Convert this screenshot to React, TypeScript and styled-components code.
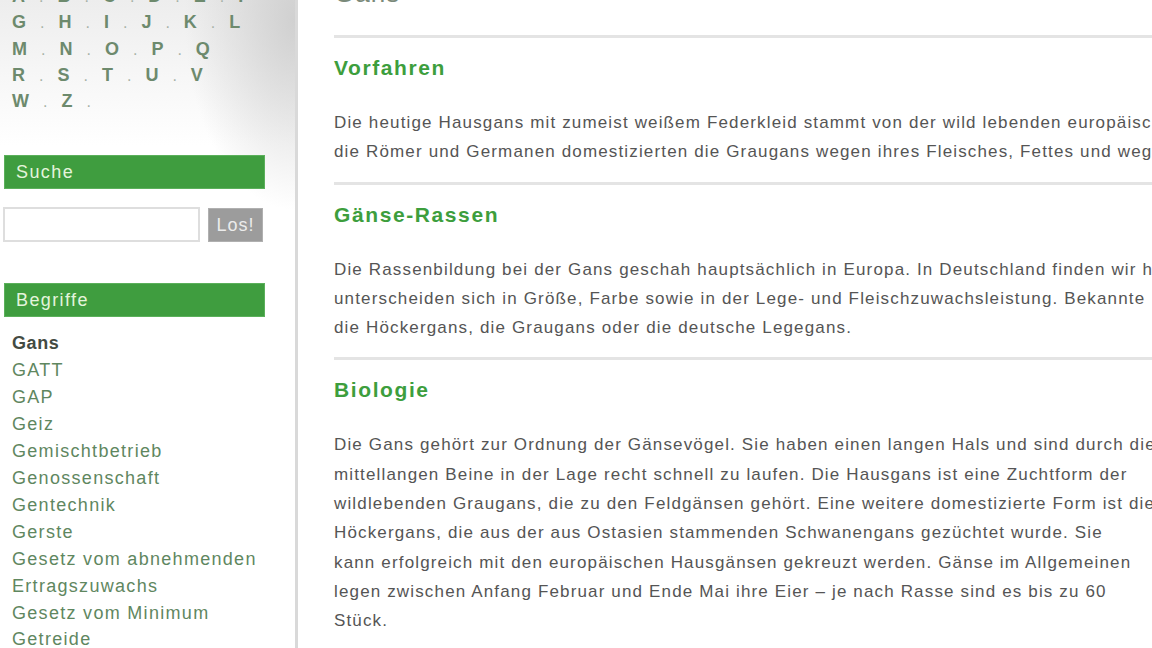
import React from "react";
import styled, { createGlobalStyle } from "styled-components";

const GlobalStyle = createGlobalStyle`
  html, body {
    margin: 0;
    padding: 0;
    width: 1152px;
    height: 648px;
    overflow: hidden;
    background: #ffffff;
  }
  * {
    box-sizing: border-box;
  }
`;

const ROWS = [
  { letters: ["A", "B", "C", "D", "E", "F"], trailing: false },
  { letters: ["G", "H", "I", "J", "K", "L"], trailing: false },
  { letters: ["M", "N", "O", "P", "Q"], trailing: false },
  { letters: ["R", "S", "T", "U", "V"], trailing: false },
  { letters: ["W", "Z"], trailing: true },
];

const TERMS = [
  "Gans",
  "GATT",
  "GAP",
  "Geiz",
  "Gemischtbetrieb",
  "Genossenschaft",
  "Gentechnik",
  "Gerste",
  "Gesetz vom abnehmenden",
  "Ertragszuwachs",
  "Gesetz vom Minimum",
  "Getreide",
];

const SECTIONS = [
  {
    title: "Vorfahren",
    lines: [
      "Die heutige Hausgans mit zumeist weißem Federkleid stammt von der wild lebenden europäischen Graugans ab. Bereits",
      "die Römer und Germanen domestizierten die Graugans wegen ihres Fleisches, Fettes und wegen ihrer Federn.",
    ],
  },
  {
    title: "Gänse-Rassen",
    lines: [
      "Die Rassenbildung bei der Gans geschah hauptsächlich in Europa. In Deutschland finden wir heute zahlreiche Rassen. Sie",
      "unterscheiden sich in Größe, Farbe sowie in der Lege- und Fleischzuwachsleistung. Bekannte Rassen sind",
      "die Höckergans, die Graugans oder die deutsche Legegans.",
    ],
  },
  {
    title: "Biologie",
    lines: [
      "Die Gans gehört zur Ordnung der Gänsevögel. Sie haben einen langen Hals und sind durch die",
      "mittellangen Beine in der Lage recht schnell zu laufen. Die Hausgans ist eine Zuchtform der",
      "wildlebenden Graugans, die zu den Feldgänsen gehört. Eine weitere domestizierte Form ist die",
      "Höckergans, die aus der aus Ostasien stammenden Schwanengans gezüchtet wurde. Sie",
      "kann erfolgreich mit den europäischen Hausgänsen gekreuzt werden. Gänse im Allgemeinen",
      "legen zwischen Anfang Februar und Ende Mai ihre Eier – je nach Rasse sind es bis zu 60",
      "Stück.",
    ],
  },
];

const App = () => {
  return (
    <>
      <GlobalStyle />
      <StyledPage>
        <StyledSidebar>
          <StyledAlphabet>
            {ROWS.map((row, r) => (
              <StyledAlphaRow key={r}>
                {row.letters.map((l, i) => (
                  <React.Fragment key={l}>
                    <StyledLetter>{l}</StyledLetter>
                    {(i < row.letters.length - 1 || row.trailing) && (
                      <StyledDot>.</StyledDot>
                    )}
                  </React.Fragment>
                ))}
              </StyledAlphaRow>
            ))}
          </StyledAlphabet>

          <StyledBoxTitle>Suche</StyledBoxTitle>
          <StyledSearchRow>
            <StyledInput type="text" />
            <StyledButton>Los!</StyledButton>
          </StyledSearchRow>

          <StyledBoxTitle>Begriffe</StyledBoxTitle>
          <StyledTermList>
            {TERMS.map((t, i) => (
              <StyledTerm key={t} active={i === 0}>
                {t}
              </StyledTerm>
            ))}
          </StyledTermList>
        </StyledSidebar>

        <StyledContent>
          <StyledPageTitle>Gans</StyledPageTitle>
          {SECTIONS.map((s) => (
            <StyledSection key={s.title}>
              <StyledRule />
              <StyledHeading>{s.title}</StyledHeading>
              <StyledParagraph>
                {s.lines.map((line, i) => (
                  <StyledLine key={i}>{line}</StyledLine>
                ))}
              </StyledParagraph>
            </StyledSection>
          ))}
        </StyledContent>
      </StyledPage>
    </>
  );
};

export default App;

const StyledPage = styled.div`
  display: flex;
  width: 1152px;
  height: 648px;
  overflow: hidden;
  font-family: "Liberation Sans", Arial, sans-serif;
`;

const StyledSidebar = styled.aside`
  flex: 0 0 298px;
  height: 100%;
  padding: 0 30px 0 3px;
  border-right: 3px solid #d9d9d9;
  background:
    radial-gradient(ellipse 110px 190px at 100% 20px, #d0d0d0 0%, rgba(255, 255, 255, 0) 100%),
    linear-gradient(180deg, #ededed 0%, #f6f6f6 70px, #ffffff 145px);
`;

const StyledAlphabet = styled.div`
  margin-top: -17px;
  padding-left: 9px;
`;

const StyledAlphaRow = styled.div`
  display: flex;
  align-items: baseline;
  height: 26.3px;
  line-height: 26px;
`;

const StyledLetter = styled.span`
  font-size: 18px;
  font-weight: bold;
  color: #6d8a6d;
`;

const StyledDot = styled.span`
  font-size: 16px;
  color: #a7b2a7;
  padding: 0 14px;
`;

const StyledBoxTitle = styled.div`
  width: 261px;
  height: 34px;
  margin: 41px 0 0 1px;
  padding-left: 11px;
  background: #3f9d3f;
  border: 1px solid #5bb05b;
  color: #e4f4dc;
  font-size: 18px;
  letter-spacing: 1.4px;
  line-height: 32px;
`;

const StyledSearchRow = styled.div`
  display: flex;
  align-items: center;
  gap: 8px;
  margin-top: 17px;
`;

const StyledInput = styled.input`
  width: 197px;
  height: 35px;
  border: 2px solid #dedede;
  background: #ffffff;
  outline: none;
`;

const StyledButton = styled.button`
  width: 55px;
  height: 34px;
  margin-top: 2px;
  border: 1px solid #b0b0b0;
  background: #9c9c9c;
  color: #ececec;
  font-family: "Liberation Sans", Arial, sans-serif;
  font-size: 18px;
  letter-spacing: 1px;
  padding: 0;
`;

const StyledTermList = styled.div`
  margin-top: 13px;
  padding-left: 9px;
`;

const StyledTerm = styled.div<{ active: boolean }>`
  font-size: 18px;
  line-height: 26.9px;
  letter-spacing: ${(p) => (p.active ? "0.6px" : "1.3px")};
  white-space: nowrap;
  font-weight: ${(p) => (p.active ? "bold" : "normal")};
  color: ${(p) => (p.active ? "#434b43" : "#5f875f")};
`;

const StyledContent = styled.main`
  flex: 1 0 auto;
  padding-left: 36px;
  color: #555555;
`;

const StyledPageTitle = styled.h1`
  margin: -22px 0 0 0;
  height: 30px;
  font-size: 26px;
  line-height: 30px;
  font-weight: normal;
  color: #7a8a7a;
  letter-spacing: 1px;
`;

const StyledSection = styled.section`
  display: flex;
  flex-direction: column;
`;

const StyledRule = styled.div`
  height: 3px;
  margin-top: 27px;
  background: #e4e4e4;
  width: 900px;
`;

const StyledHeading = styled.h2`
  margin: 17px 0 0 0;
  font-size: 21px;
  line-height: 26px;
  font-weight: bold;
  letter-spacing: 1.6px;
  color: #3d9e3d;
`;

const StyledParagraph = styled.div`
  margin-top: 27px;
  margin-bottom: -12px;
`;

const StyledLine = styled.div`
  font-size: 17px;
  line-height: 29.3px;
  letter-spacing: 1.15px;
  white-space: nowrap;
`;
